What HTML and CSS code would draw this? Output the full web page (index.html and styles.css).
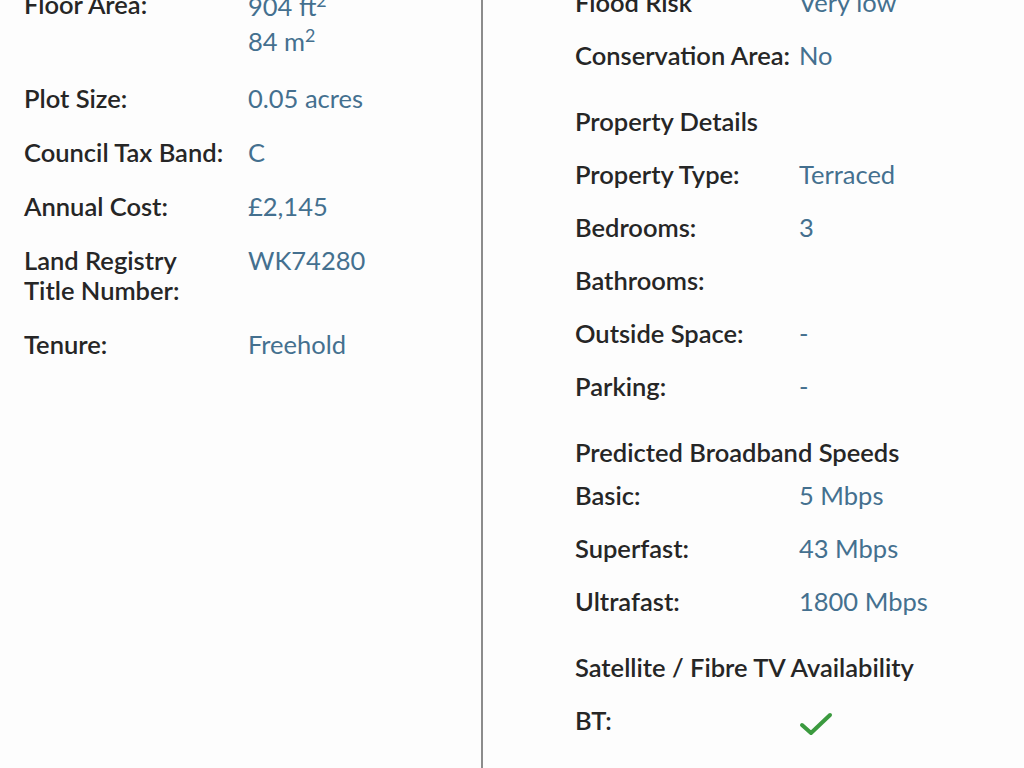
FILE: index.html
```html
<!DOCTYPE html>
<html lang="en">
  <head>
    <meta charset="UTF-8" />
    <meta name="viewport" content="width=device-width, initial-scale=1.0" />
    <title>Property Report</title>
    <link rel="stylesheet" href="styles.css">
  </head>
  <body>
    <div class="sheet">
      <section class="col col-left">
        <div class="row">
          <div class="label">Floor Area:</div>
          <div class="value area">904 ft<sup>2</sup><br />84 m<sup>2</sup></div>
        </div>
        <div class="row">
          <div class="label">Plot Size:</div>
          <div class="value">0.05 acres</div>
        </div>
        <div class="row">
          <div class="label">Council Tax Band:</div>
          <div class="value">C</div>
        </div>
        <div class="row">
          <div class="label">Annual Cost:</div>
          <div class="value">£2,145</div>
        </div>
        <div class="row">
          <div class="label">Land Registry<br />Title Number:</div>
          <div class="value">WK74280</div>
        </div>
        <div class="row">
          <div class="label">Tenure:</div>
          <div class="value">Freehold</div>
        </div>
      </section>

      <section class="col col-right">
        <div class="row">
          <div class="label">Flood Risk</div>
          <div class="value">Very low</div>
        </div>
        <div class="row">
          <div class="label">Conservation Area:</div>
          <div class="value">No</div>
        </div>

        <h3 class="heading">Property Details</h3>
        <div class="row">
          <div class="label">Property Type:</div>
          <div class="value">Terraced</div>
        </div>
        <div class="row">
          <div class="label">Bedrooms:</div>
          <div class="value">3</div>
        </div>
        <div class="row">
          <div class="label">Bathrooms:</div>
          <div class="value"></div>
        </div>
        <div class="row">
          <div class="label">Outside Space:</div>
          <div class="value">-</div>
        </div>
        <div class="row">
          <div class="label">Parking:</div>
          <div class="value">-</div>
        </div>

        <h3 class="heading heading-tight">Predicted Broadband Speeds</h3>
        <div class="row">
          <div class="label">Basic:</div>
          <div class="value">5 Mbps</div>
        </div>
        <div class="row">
          <div class="label">Superfast:</div>
          <div class="value">43 Mbps</div>
        </div>
        <div class="row">
          <div class="label">Ultrafast:</div>
          <div class="value">1800 Mbps</div>
        </div>

        <h3 class="heading">Satellite / Fibre TV Availability</h3>
        <div class="row">
          <div class="label">BT:</div>
          <div class="value">
            <svg class="tick" width="34" height="26" viewBox="0 0 34 26">
              <path d="M3 14 L12 22 L31 4" fill="none" stroke="#3b9a3f" stroke-width="4" stroke-linecap="round" stroke-linejoin="round" />
            </svg>
          </div>
        </div>
      </section>
    </div>
  </body>
</html>
```

FILE: styles.css
```css
body {
  margin: 0;
  background: #fdfdfd;
  font-family: Lato, "Noto Sans", sans-serif;
  font-size: 25.5px;
  color: #262626;
  overflow: hidden;
}
.sheet {
  display: flex;
  margin-top: -13px;
  min-height: 790px;
}
.col {
  display: flex;
  flex-direction: column;
}
.col-left {
  width: 457px;
  padding-left: 24px;
  padding-top: 2px;
  gap: 24px;
  border-right: 2px solid #8c8c8c;
}
.col-right {
  padding-left: 92px;
  gap: 23px;
}
.row {
  display: flex;
  line-height: 30px;
}
.label {
  flex: 0 0 auto;
  min-width: 224px;
  font-weight: 600;
  white-space: nowrap;
}
.value {
  color: #44708f;
}
.value sup {
  font-size: 0.7em;
  line-height: 0;
}
.area {
  line-height: 35px;
}
.heading {
  margin: 13px 0 0;
  font-size: 25.5px;
  font-weight: 600;
  line-height: 30px;
}
.heading-tight {
  margin-bottom: -10px;
}
.tick {
  display: block;
  margin-top: 6px;
}
```
